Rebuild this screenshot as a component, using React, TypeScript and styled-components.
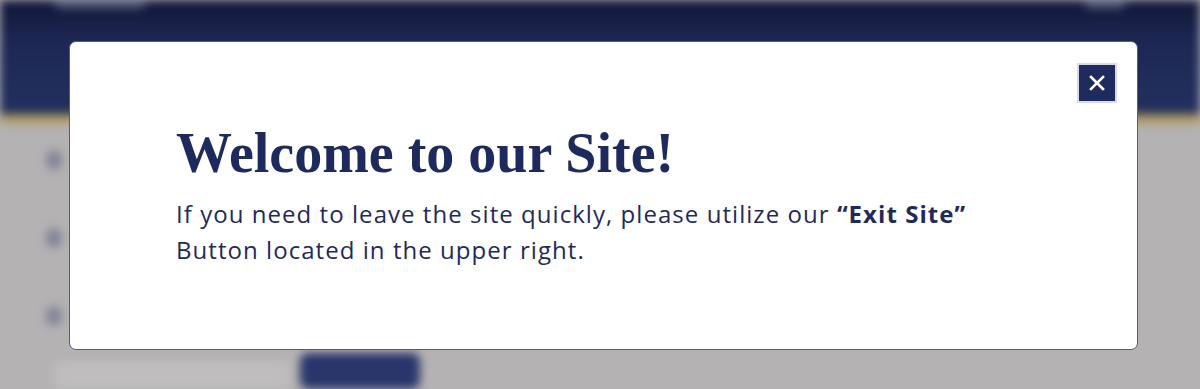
import React from "react";
import styled, { createGlobalStyle } from "styled-components";

const GlobalStyle = createGlobalStyle`
  html, body {
    margin: 0;
    padding: 0;
    width: 1200px;
    height: 389px;
    overflow: hidden;
  }
`;

const Page = styled.div`
  position: relative;
  width: 1200px;
  height: 389px;
  overflow: hidden;
  background: #b4b2b3;
`;

const Backdrop = styled.div`
  display: flex;
  flex-direction: column;
  height: 100%;
  filter: blur(5px);
`;

const Header = styled.div`
  height: 114px;
  background: linear-gradient(180deg, #121737 0%, #151b40 12%, #1d2753 35%, #22305e 100%);
  display: flex;
  justify-content: space-between;
  padding: 0 75px 0 55px;
`;

const HeaderBlob = styled.div<{ $w: number }>`
  width: ${(p) => p.$w}px;
  height: 10px;
  margin-top: -2px;
  background: #5a6080;
  border-radius: 6px;
`;

const GoldBand = styled.div`
  height: 11px;
  background: linear-gradient(180deg, #a88f4a, #b5aa8a);
`;

const Content = styled.div`
  flex: 1;
  display: flex;
  flex-direction: column;
  padding: 25px 0 0 46px;
  gap: 58px;
`;

const Dot = styled.div`
  width: 16px;
  height: 20px;
  border-radius: 50%;
  background: #808297;
`;

const FormRow = styled.div`
  display: flex;
  align-items: flex-end;
  margin-left: 55px;
  gap: 10px;
`;

const FakeInput = styled.div`
  width: 235px;
  height: 28px;
  background: #bfbdbe;
`;

const FakeButton = styled.div`
  width: 120px;
  height: 36px;
  border-radius: 8px;
  background: #29356b;
`;

const Modal = styled.div`
  position: absolute;
  left: 69px;
  top: 41px;
  width: 1067px;
  height: 307px;
  background: #ffffff;
  border: 1px solid #4d5f7c;
  border-radius: 7px;
`;

const ModalBody = styled.div`
  padding: 82px 0 0 106px;
  color: #1f2a5c;
`;

const Title = styled.h1`
  margin: 0;
  font-family: "Liberation Serif", "DejaVu Serif", serif;
  font-weight: 700;
  font-size: 56px;
  line-height: 58px;
  color: #1f2a5c;
`;

const Message = styled.p`
  margin: 14px 0 0;
  font-family: "Open Sans", "Liberation Sans", sans-serif;
  font-size: 24px;
  line-height: 36px;
  letter-spacing: 1.05px;
  color: #1f2a5c;

  strong {
    font-weight: 700;
  }
`;

const CloseButton = styled.button`
  position: absolute;
  top: 21px;
  right: 20px;
  width: 40px;
  height: 40px;
  padding: 0;
  background: #1f2b5e;
  border: 2px solid #d8dbe6;
  display: flex;
  align-items: center;
  justify-content: center;
  cursor: pointer;
`;

export default function App() {
  return (
    <Page>
      <GlobalStyle />
      <Backdrop>
        <Header>
          <HeaderBlob $w={90} />
          <HeaderBlob $w={40} />
        </Header>
        <GoldBand />
        <Content>
          <Dot />
          <Dot />
          <Dot />
        </Content>
        <FormRow>
          <FakeInput />
          <FakeButton />
        </FormRow>
      </Backdrop>
      <Modal role="dialog">
        <CloseButton aria-label="Close">
          <svg width="16" height="16" viewBox="0 0 16 16">
            <path d="M2 2 L14 14 M14 2 L2 14" stroke="#ffffff" strokeWidth="2.6" strokeLinecap="square" />
          </svg>
        </CloseButton>
        <ModalBody>
          <Title>Welcome to our Site!</Title>
          <Message>
            If you need to leave the site quickly, please utilize our <strong>“Exit Site”</strong>
            <br />
            Button located in the upper right.
          </Message>
        </ModalBody>
      </Modal>
    </Page>
  );
}
